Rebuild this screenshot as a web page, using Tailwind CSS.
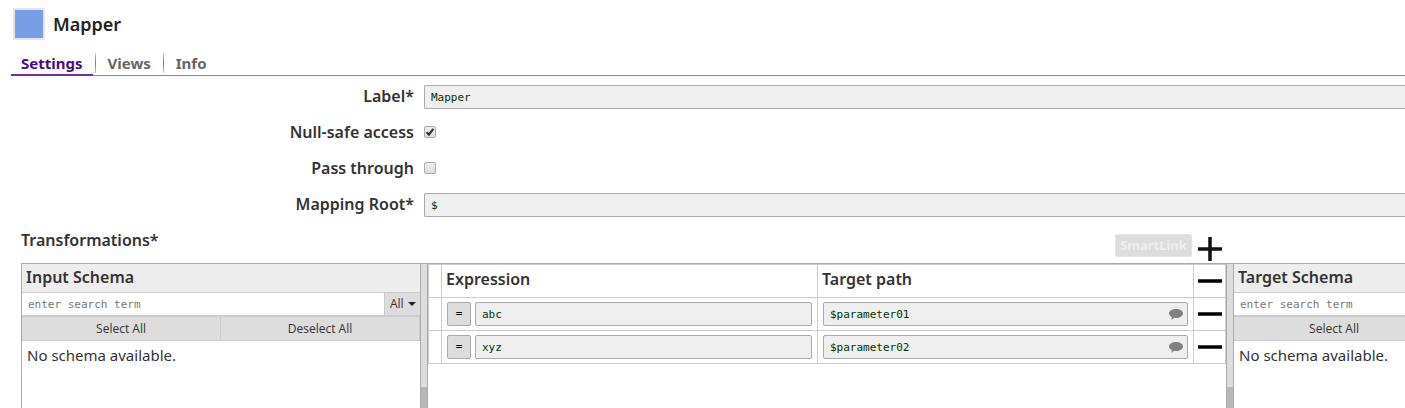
<!DOCTYPE html>
<html lang="en">

<head>
  <meta charset="UTF-8" />
  <meta name="viewport" content="width=device-width, initial-scale=1.0" />
  <title>Mapper</title>
  <script src="https://cdn.jsdelivr.net/npm/@tailwindcss/browser@4"></script>
</head>

<body class="bg-white text-[#333] font-['Noto_Sans',sans-serif] overflow-hidden">
  <div class="flex flex-col h-screen pt-2">

    <!-- Header -->
    <header class="flex items-center gap-2 pl-[13px]">
      <div class="size-8 bg-[#789fe5] border-2 border-[#e5e5e5]"></div>
      <h1 class="text-lg leading-8 font-semibold text-[#222]">Mapper</h1>
    </header>

    <!-- Tabs -->
    <nav class="flex h-6 mt-3 ml-[11px] border-b border-[#888] text-[15px] leading-[23px] font-bold text-[#666]">
      <a href="#settings" class="h-6 px-[10px] border-b-2 border-[#7030a0] text-[#4b0a82]">Settings</a>
      <span class="w-px h-5 mt-px ml-0.5 bg-linear-to-b from-[#ccc] via-[#777] to-[#ccc]"></span>
      <a href="#views" class="px-3">Views</a>
      <span class="w-px h-5 mt-px bg-linear-to-b from-[#ccc] via-[#777] to-[#ccc]"></span>
      <a href="#info" class="px-3">Info</a>
    </nav>

    <!-- Settings -->
    <form class="grid grid-cols-[414px_1fr] gap-x-[10px] gap-y-3 mt-[9px] items-start text-base leading-[22px] font-semibold">
      <label for="label" class="h-6 text-right">Label*</label>
      <input id="label" type="text" value="Mapper"
        class="h-6 w-full px-[6px] border border-r-0 border-[#aaa] rounded-l-xs bg-[#efefef] font-['DejaVu_Sans_Mono',monospace] text-[11px] font-normal text-[#030]">

      <label for="nullsafe" class="h-6 text-right">Null-safe access</label>
      <div class="grid size-3 mt-[5px]">
        <input id="nullsafe" type="checkbox" checked
          class="peer col-start-1 row-start-1 appearance-none size-3 border border-[#aaa] rounded-xs bg-linear-to-b from-[#eee] to-[#ddd]">
        <svg class="col-start-1 row-start-1 size-3 pointer-events-none invisible peer-checked:visible" viewBox="0 0 12 12">
          <path d="M2.6 6.2 4.9 8.6 9.3 2.8" fill="none" stroke="#333" stroke-width="2.2" />
        </svg>
      </div>

      <label for="passthrough" class="h-6 text-right">Pass through</label>
      <input id="passthrough" type="checkbox"
        class="appearance-none size-3 mt-[5px] border border-[#aaa] rounded-xs bg-linear-to-b from-[#eee] to-[#ddd]">

      <label for="root" class="h-6 text-right">Mapping Root*</label>
      <input id="root" type="text" value="$"
        class="h-6 w-full px-[6px] border border-r-0 border-[#aaa] rounded-l-xs bg-[#efefef] font-['DejaVu_Sans_Mono',monospace] text-[11px] font-normal text-[#030]">
    </form>

    <!-- Transformations toolbar -->
    <div class="flex h-[46px] pl-[21px] pr-[183px]">
      <h2 class="flex-1 mt-3 text-base leading-[22px] font-semibold">Transformations*</h2>
      <button type="button" disabled
        class="h-[23px] w-[77px] mt-[17px] pb-0.5 border border-[#e5e5e5] rounded-xs bg-[#ddd] text-[13px] leading-5 font-bold text-[#eee]">SmartLink</button>
      <button type="button" aria-label="Add row" class="size-6 mt-5 ml-[6px]">
        <svg class="size-6" viewBox="0 0 24 24">
          <path d="M12 0v24M0 12h24" stroke="#111" stroke-width="3.5" />
        </svg>
      </button>
    </div>

    <!-- Split view -->
    <div class="flex flex-1 min-h-0 ml-[21px] border-t border-l border-[#aaa]">

      <!-- Input schema -->
      <section class="w-[398px] shrink-0">
        <h3 class="h-[29px] pl-1 bg-[#ededed] border-b border-[#ccc] text-base leading-[27px] font-semibold">Input Schema</h3>
        <div class="flex h-6 border-b-2 border-[#ccc]">
          <input type="search" aria-label="Search input schema" placeholder="enter search term"
            class="flex-1 min-w-0 px-[6px] pt-0.5 font-['DejaVu_Sans_Mono',monospace] text-[11px] placeholder:text-[#777]">
          <div class="grid w-9 items-center border-l border-[#ccc] bg-[#ddd]">
            <select aria-label="Filter" class="col-start-1 row-start-1 appearance-none w-full h-full pl-[5px] font-['Open_Sans',sans-serif] text-[12px]">
              <option>All</option>
            </select>
            <svg class="col-start-1 row-start-1 justify-self-end mr-1 w-2 h-1 pointer-events-none" viewBox="0 0 8 4">
              <path d="M0 0h8L4 4z" fill="#222" />
            </svg>
          </div>
        </div>
        <div class="grid grid-cols-2 h-[24px] bg-[#ddd] border-b border-[#ccc] font-['Open_Sans',sans-serif] text-[12px]">
          <button type="button" class="border-r border-[#ccc]">Select All</button>
          <button type="button" class="border-r border-[#ccc]">Deselect All</button>
        </div>
        <p class="pl-[5px] pt-[3px] text-[15px] leading-[22px]">No schema available.</p>
      </section>

      <div class="flex flex-col w-2 shrink-0 border-x border-[#aaa] bg-[#ddd]">
        <div class="h-[123px]"></div>
        <div class="flex-1 bg-[#b8b8b8]"></div>
      </div>

      <!-- Mappings -->
      <section class="flex-1 min-w-0">
        <table class="w-full table-fixed border-collapse text-base text-left">
          <colgroup>
            <col class="w-[13px]">
            <col>
            <col>
            <col class="w-8">
          </colgroup>
          <thead>
            <tr class="h-[33px]">
              <th class="border border-[#ccc]"></th>
              <th class="border border-[#ccc] pl-1 pb-1 leading-6 font-semibold">Expression</th>
              <th class="border border-[#ccc] pl-1 pb-1 leading-6 font-semibold">Target path</th>
              <th class="border border-[#ccc] pl-1">
                <button type="button" aria-label="Remove all" class="block w-6 h-4">
                  <svg class="w-6 h-4" viewBox="0 0 24 16"><path d="M0 8h24" stroke="#000" stroke-width="3.5" /></svg>
                </button>
              </th>
            </tr>
          </thead>
          <tbody>
            <tr class="h-[33px]">
              <td class="border border-[#ccc]"></td>
              <td class="border border-[#ccc] px-[5px]">
                <div class="flex gap-1">
                  <button type="button" class="size-6 border border-[#aaa] rounded-xs bg-[#ddd] font-['DejaVu_Sans_Mono',monospace] text-[11px] text-black">=</button>
                  <input type="text" value="abc" aria-label="Expression 1"
                    class="flex-1 min-w-0 h-6 px-[6px] border border-[#aaa] rounded-xs bg-[#efefef] font-['DejaVu_Sans_Mono',monospace] text-[11px] text-[#030]">
                </div>
              </td>
              <td class="border border-[#ccc] px-[5px]">
                <div class="flex items-center h-6 pl-[6px] pr-1 border border-[#aaa] rounded-xs bg-[#efefef]">
                  <input type="text" value="$parameter01" aria-label="Target path 1"
                    class="flex-1 min-w-0 h-full font-['DejaVu_Sans_Mono',monospace] text-[11px] text-[#030]">
                  <svg class="w-[14px] h-[11px]" viewBox="0 0 14 11">
                    <path d="M7 0c3.9 0 7 2 7 4.5S10.900 9 7 9c-.7 0-1.300 0-1.900-.2C4.300 9.900 3.300 10.500 2 10.700c.6-.7.900-1.500.8-2.700C1.100 7.200 0 5.900 0 4.500 0 2 3.100 0 7 0z" fill="#808080" />
                  </svg>
                </div>
              </td>
              <td class="border border-[#ccc] pl-1">
                <button type="button" aria-label="Remove row 1" class="block w-6 h-4">
                  <svg class="w-6 h-4" viewBox="0 0 24 16"><path d="M0 8h24" stroke="#000" stroke-width="3.5" /></svg>
                </button>
              </td>
            </tr>
            <tr class="h-[33px]">
              <td class="border border-[#ccc]"></td>
              <td class="border border-[#ccc] px-[5px]">
                <div class="flex gap-1">
                  <button type="button" class="size-6 border border-[#aaa] rounded-xs bg-[#ddd] font-['DejaVu_Sans_Mono',monospace] text-[11px] text-black">=</button>
                  <input type="text" value="xyz" aria-label="Expression 2"
                    class="flex-1 min-w-0 h-6 px-[6px] border border-[#aaa] rounded-xs bg-[#efefef] font-['DejaVu_Sans_Mono',monospace] text-[11px] text-[#030]">
                </div>
              </td>
              <td class="border border-[#ccc] px-[5px]">
                <div class="flex items-center h-6 pl-[6px] pr-1 border border-[#aaa] rounded-xs bg-[#efefef]">
                  <input type="text" value="$parameter02" aria-label="Target path 2"
                    class="flex-1 min-w-0 h-full font-['DejaVu_Sans_Mono',monospace] text-[11px] text-[#030]">
                  <svg class="w-[14px] h-[11px]" viewBox="0 0 14 11">
                    <path d="M7 0c3.9 0 7 2 7 4.5S10.900 9 7 9c-.7 0-1.300 0-1.900-.2C4.300 9.900 3.300 10.500 2 10.700c.6-.7.900-1.500.8-2.700C1.100 7.200 0 5.900 0 4.500 0 2 3.100 0 7 0z" fill="#808080" />
                  </svg>
                </div>
              </td>
              <td class="border border-[#ccc] pl-1">
                <button type="button" aria-label="Remove row 2" class="block w-6 h-4">
                  <svg class="w-6 h-4" viewBox="0 0 24 16"><path d="M0 8h24" stroke="#000" stroke-width="3.5" /></svg>
                </button>
              </td>
            </tr>
          </tbody>
        </table>
      </section>

      <div class="flex flex-col w-2 shrink-0 border-x border-[#aaa] bg-[#ddd]">
        <div class="h-[123px]"></div>
        <div class="flex-1 bg-[#b8b8b8]"></div>
      </div>

      <!-- Target schema -->
      <section class="w-[171px] shrink-0 overflow-hidden">
        <h3 class="h-[29px] pl-1 bg-[#ededed] border-b border-[#ccc] text-base leading-[27px] font-semibold">Target Schema</h3>
        <div class="flex h-6 border-b-2 border-[#ccc]">
          <input type="search" aria-label="Search target schema" placeholder="enter search term"
            class="flex-1 min-w-0 px-[6px] pt-0.5 font-['DejaVu_Sans_Mono',monospace] text-[11px] placeholder:text-[#777]">
        </div>
        <div class="flex h-[24px] bg-[#ddd] border-b border-[#ccc] font-['Open_Sans',sans-serif] text-[12px]">
          <button type="button" class="w-[200px] shrink-0">Select All</button>
        </div>
        <p class="pl-[5px] pt-[3px] text-[15px] leading-[22px] whitespace-nowrap">No schema available.</p>
      </section>
    </div>
  </div>
</body>

</html>
